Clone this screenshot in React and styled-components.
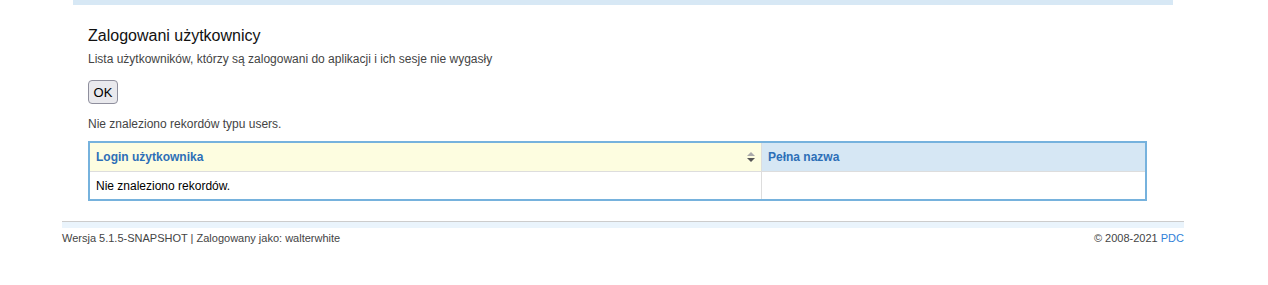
import React from "react";
import styled, { createGlobalStyle } from "styled-components";

const Global = createGlobalStyle`
  html, body { margin: 0; padding: 0; background: #fff; }
  body { font-family: "Liberation Sans", Arial, sans-serif; color: #000; }
`;

const Page = styled.div`
  width: 1122px;
  margin-left: 62px;
`;

const TopBar = styled.div`
  height: 5px;
  margin: 0 11px;
  background: #d7e8f5;
`;

const Content = styled.div`
  margin: 0 11px;
  padding: 21px 26px 0 15px;
`;

const Title = styled.h1`
  margin: 0;
  font-size: 16px;
  font-weight: normal;
  line-height: 20px;
  color: #111;
`;

const Subtitle = styled.p`
  margin: 5px 0 0;
  font-size: 12px;
  line-height: 16px;
  color: #444;
`;

const Button = styled.button`
  margin-top: 13px;
  height: 24px;
  width: 30px;
  padding: 0;
  font-family: "Liberation Sans", Arial, sans-serif;
  font-size: 13px;
  color: #000;
  background: #e9e9ed;
  border: 1px solid #8f8f9d;
  border-radius: 4px;
  display: block;
`;

const Info = styled.p`
  margin: 12px 0 0;
  font-size: 12px;
  line-height: 16px;
  color: #444;
`;

const Table = styled.table`
  margin-top: 9px;
  width: 1059px;
  border-collapse: collapse;
  border: 2px solid #76b2dd;
  font-size: 12px;
`;

const Th = styled.th`
  height: 28px;
  padding: 0 6px;
  text-align: left;
  font-weight: bold;
  color: #2d6fb7;
  background: ${(p) => (p.$sorted ? "#fdfde0" : "#d6e7f4")};
  border-left: 1px solid #ddd;
  border-bottom: 1px solid #ddd;
  &:first-child { border-left: none; }
`;

const ThInner = styled.div`
  display: flex;
  align-items: center;
  justify-content: space-between;
`;

const Td = styled.td`
  height: 27px;
  padding: 0 6px;
  color: #000;
  border-left: 1px solid #ddd;
  &:first-child { border-left: none; }
`;

const Footer = styled.div`
  margin-top: 20px;
  border-top: 1px solid #ccc;
`;

const FooterBand = styled.div`
  height: 6px;
  background: #eaf4fc;
`;

const FooterRow = styled.div`
  display: flex;
  justify-content: space-between;
  font-size: 11px;
  line-height: 14px;
  color: #444;
  padding-top: 3px;
`;

const Link = styled.span`
  color: #2f7fd8;
`;

const SortIcon = () => (
  <svg width="8" height="10" viewBox="0 0 8 10">
    <polygon points="4,0 8,4 0,4" fill="#aaa" />
    <polygon points="0,6 8,6 4,10" fill="#555" />
  </svg>
);

export default function App() {
  return (
    <>
      <Global />
      <Page>
        <TopBar />
        <Content>
          <Title>Zalogowani użytkownicy</Title>
          <Subtitle>
            Lista użytkowników, którzy są zalogowani do aplikacji i ich sesje nie wygasły
          </Subtitle>
          <Button>OK</Button>
          <Info>Nie znaleziono rekordów typu users.</Info>
          <Table>
            <thead>
              <tr>
                <Th $sorted style={{ width: "659px" }}>
                  <ThInner>
                    <span>Login użytkownika</span>
                    <SortIcon />
                  </ThInner>
                </Th>
                <Th>Pełna nazwa</Th>
              </tr>
            </thead>
            <tbody>
              <tr>
                <Td>Nie znaleziono rekordów.</Td>
                <Td />
              </tr>
            </tbody>
          </Table>
        </Content>
        <Footer>
          <FooterBand />
          <FooterRow>
            <span>Wersja 5.1.5-SNAPSHOT | Zalogowany jako: walterwhite</span>
            <span>
              © 2008-2021 <Link>PDC</Link>
            </span>
          </FooterRow>
        </Footer>
      </Page>
    </>
  );
}
